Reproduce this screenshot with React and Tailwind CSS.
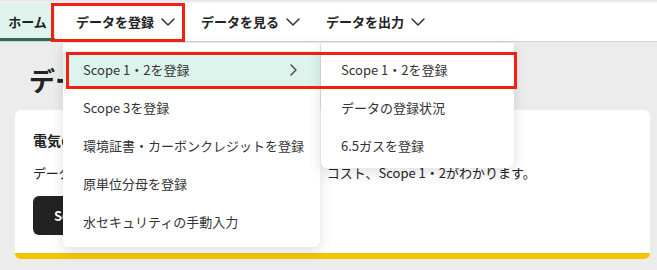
const font = { fontFamily: '"Noto Sans CJK JP", "Noto Sans", sans-serif' };

function ChevronDown() {
  return (
    <svg width="14" height="8" viewBox="0 0 14 8" fill="none" stroke="#333" strokeWidth="1.5" strokeLinecap="round" strokeLinejoin="round">
      <polyline points="1,1 7,7 13,1" />
    </svg>
  );
}

function ChevronRight() {
  return (
    <svg width="7" height="12" viewBox="0 0 7 12" fill="none" stroke="#444" strokeWidth="1.4" strokeLinecap="round" strokeLinejoin="round">
      <polyline points="1,1 6,6 1,11" />
    </svg>
  );
}

const navItems = ['データを登録', 'データを見る', 'データを出力'];
const menuItems = ['Scope 3を登録', '環境証書・カーボンクレジットを登録', '原単位分母を登録', '水セキュリティの手動入力'];
const subItems = ['Scope 1・2を登録', 'データの登録状況', '6.5ガスを登録'];

export default function App() {
  return (
    <div className="relative h-[270px] w-[657px] overflow-hidden bg-[#ececec] text-[#222]" style={font}>
      <div className="h-[3px] bg-gradient-to-b from-[#e4e4e4] to-[#f6f6f6]" />
      <nav className="flex h-[39px] items-stretch border-b border-[#d4d4d4] bg-white">
        <div className="flex w-[55px] items-center justify-center border-b-[3px] border-[#2f6a52] bg-[#dff4ec] pt-[2px] text-[13px] font-bold">
          ホーム
        </div>
        <div className="ml-[21px] flex items-center gap-[26px]">
          {navItems.map((t) => (
            <div key={t} className="flex items-center gap-[7px] text-[13px] font-bold">
              <span>{t}</span>
              <ChevronDown />
            </div>
          ))}
        </div>
      </nav>

      <main className="pl-[15px]">
        <h1 className="mt-[20px] mb-[12px] pl-[14px] text-[26px] font-bold leading-[36px]">データを登録</h1>
        <section className="w-[635px] rounded-md border-b-[6px] border-[#f5c400] bg-white pb-[18px] pl-[18px] pt-[20px]">
          <h2 className="text-[14px] font-bold leading-[20px]">電気のデータを登録</h2>
          <p className="mt-[13px] text-[13px] leading-[20px]">
            <span className="tracking-[-0.2px]">データを登録すると、各拠点ごとの電気の使用量、</span>コスト、Scope 1・2がわかります。
          </p>
          <button className="mt-[13px] flex h-[39px] items-center rounded-md bg-[#222] px-[21px] text-[13px] font-bold text-white">
            Scope 1・2を登録する
          </button>
        </section>
      </main>

      <div className="absolute left-[63px] top-[43px] w-[257px] rounded-b-md bg-white pb-[6px] pt-[8px] shadow-[0_4px_14px_rgba(0,0,0,0.13)]">
        <div className="flex h-[38px] items-center justify-between bg-[#dcf4ec] pl-[20px] pr-[23px] text-[13px] text-[#333]">
          <span>Scope 1・2を登録</span>
          <ChevronRight />
        </div>
        {menuItems.map((t) => (
          <div key={t} className="flex h-[38px] items-center pl-[20px] text-[13px] text-[#333]">
            {t}
          </div>
        ))}
      </div>

      <div className="absolute left-[321px] top-[43px] w-[193px] rounded-b-md bg-white pb-[3px] pt-[8px] shadow-[0_4px_14px_rgba(0,0,0,0.13)]">
        {subItems.map((t) => (
          <div key={t} className="flex h-[38px] items-center pl-[20px] text-[13px] text-[#333]">
            {t}
          </div>
        ))}
      </div>

      <div className="absolute left-[51px] top-[3px] h-[39px] w-[134px] border-[3px] border-[#f2200f]" />
      <div className="absolute left-[66px] top-[52px] h-[37px] w-[451px] border-[3px] border-[#f2200f]" />
    </div>
  );
}
